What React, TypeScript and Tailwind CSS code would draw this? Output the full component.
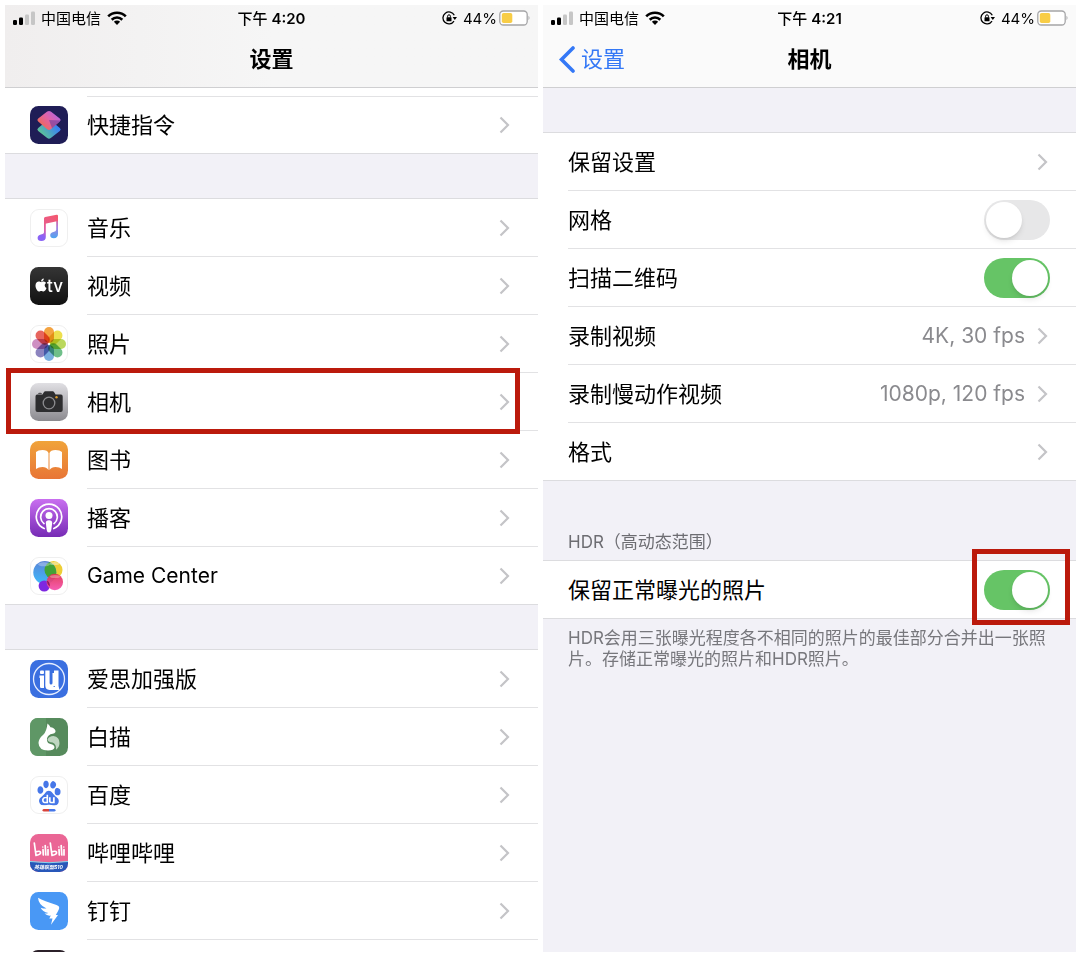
import { ReactNode } from "react";
import { FaApple } from "react-icons/fa";
import { SiBaidu } from "react-icons/si";

interface SettingsItem {
  id: string;
  name: string;
  icon: ReactNode;
  highlighted?: boolean;
}

const ShortcutsIcon = () => (
  <svg viewBox="0 0 38 38" className="size-full">
    <defs>
      <linearGradient id="sc-top" x1="0.1" y1="0.8" x2="0.9" y2="0.2">
        <stop offset="0" stopColor="#f0694f" />
        <stop offset="0.55" stopColor="#e062a8" />
        <stop offset="1" stopColor="#b565dc" />
      </linearGradient>
      <linearGradient id="sc-bottom" x1="0.1" y1="0.8" x2="0.9" y2="0.3">
        <stop offset="0.1" stopColor="#5cc19a" />
        <stop offset="0.9" stopColor="#3a82f2" />
      </linearGradient>
    </defs>
    <rect width="38" height="38" rx="8.5" fill="#1f1d56" />
    <path d="M17.2 14.6Q19 13.4 20.800 14.6L29.800 22Q31.600 23.500 29.800 25L20.800 32Q19 33.400 17.200 32L8.200 25Q6.400 23.500 8.200 22Z" fill="url(#sc-bottom)" />
    <path d="M17.2 5.6Q19 4.400 20.800 5.600L29.800 12.600Q31.600 14 29.800 15.600L20.800 23.200Q19 24.600 17.200 23.200L8.200 15.600Q6.400 14 8.200 12.600Z" fill="url(#sc-top)" />
    <path d="M19 14L30.600 14.500L29.800 15.600L22 22.200Z" fill="#6a3f9c" opacity="0.6" />
  </svg>
);

const MusicIcon = () => (
  <svg viewBox="0 0 38 38" className="size-full">
    <defs>
      <linearGradient id="music" x1="0.7" y1="0" x2="0.45" y2="1">
        <stop offset="0" stopColor="#f5576c" />
        <stop offset="0.45" stopColor="#d95fb4" />
        <stop offset="0.75" stopColor="#8a63f5" />
        <stop offset="1" stopColor="#8a63f5" />
      </linearGradient>
      <linearGradient id="music-beam" x1="0" y1="1" x2="1" y2="0">
        <stop offset="0" stopColor="#e85d8c" />
        <stop offset="1" stopColor="#f5576c" />
      </linearGradient>
      <linearGradient id="music-right" x1="0" y1="0" x2="0" y2="1">
        <stop offset="0" stopColor="#f5576c" />
        <stop offset="0.5" stopColor="#a97fe0" />
        <stop offset="1" stopColor="#4ba5f0" />
      </linearGradient>
    </defs>
    <rect x="0.5" y="0.5" width="37" height="37" rx="8.500" fill="#fff" stroke="#efefef" />
    <path d="M14 9.500H15.800V28Q15.800 31.800 11.300 32Q7.600 32 7.600 29Q7.600 26.200 11 25.600Q14 25.200 14 23.500Z" fill="url(#music)" />
    <path d="M26.200 7H28V25Q28 29 23.800 29.300Q20.200 29.300 20.200 26.300Q20.200 23.700 23.400 23Q26.200 22.500 26.200 20.800Z" fill="url(#music-right)" />
    <path d="M14 9.500Q14 8.300 15.200 8L26.600 5.700Q28 5.500 28 6.800V12L14 15Z" fill="url(#music-beam)" />
  </svg>
);

const TvIcon = () => (
  <svg viewBox="0 0 38 38" className="size-full">
    <defs>
      <linearGradient id="tv" x1="0" y1="0" x2="0" y2="1">
        <stop offset="0" stopColor="#353535" />
        <stop offset="1" stopColor="#111" />
      </linearGradient>
    </defs>
    <rect width="38" height="38" rx="8.500" fill="url(#tv)" />
    <FaApple x="3.500" y="10.500" size={15} color="#fff" />
    <text x="17" y="25" fontSize="17" fontWeight="500" fill="#fff" fontFamily="Inter, sans-serif">tv</text>
  </svg>
);

const petals = ["#f39a2d", "#ecdc3a", "#b4d44b", "#5fb87c", "#6aa5dc", "#8077b8", "#c983bb", "#e5544c"];

const PhotosIcon = () => (
  <svg viewBox="0 0 38 38" className="size-full">
    <rect x="0.500" y="0.500" width="37" height="37" rx="8.500" fill="#fff" stroke="#efefef" />
    {petals.map((color, i) => (
      <rect
        key={color}
        x="14"
        y="2"
        width="10"
        height="16"
        rx="5"
        fill={color}
        opacity="0.9"
        transform={`rotate(${i * 45} 19 19)`}
        className="mix-blend-multiply"
      />
    ))}
  </svg>
);

const CameraIcon = () => (
  <svg viewBox="0 0 38 38" className="size-full">
    <defs>
      <linearGradient id="camera" x1="0" y1="0" x2="0" y2="1">
        <stop offset="0" stopColor="#e0dfe3" />
        <stop offset="1" stopColor="#8b8a8f" />
      </linearGradient>
    </defs>
    <rect width="38" height="38" rx="8.500" fill="url(#camera)" />
    <path d="M5.500 13.500Q5.500 11.800 7.200 11.600H12.500L14 9Q14.400 8.300 15.300 8.300H22.700Q23.600 8.300 24 9L25.500 11.600H31Q32.700 11.800 32.700 13.500V27Q32.700 29 30.700 29H7.500Q5.500 29 5.500 27Z" fill="#2d2d2f" />
    <path d="M8 10.800Q8 9.800 10 9.800Q12 9.800 12 10.800Z" fill="#2d2d2f" />
    <circle cx="19" cy="20" r="5.800" fill="none" stroke="#8c8c8f" strokeWidth="1.300" />
    <circle cx="26.500" cy="14.300" r="1.200" fill="#d99a2b" />
  </svg>
);

const BooksIcon = () => (
  <svg viewBox="0 0 38 38" className="size-full">
    <defs>
      <linearGradient id="books" x1="0" y1="0" x2="0" y2="1">
        <stop offset="0" stopColor="#f0a33a" />
        <stop offset="1" stopColor="#e87536" />
      </linearGradient>
    </defs>
    <rect width="38" height="38" rx="8.500" fill="url(#books)" />
    <path d="M18.500 12Q17.500 9 12.500 9Q8 9 6 11V28Q8.500 26 12.500 26Q16.500 26 18.500 29Z" fill="#fff" />
    <path d="M19.500 12Q20.500 9 25.500 9Q30 9 32 11V28Q29.500 26 25.500 26Q21.500 26 19.500 29Z" fill="#fff" />
  </svg>
);

const PodcastsIcon = () => (
  <svg viewBox="0 0 38 38" className="size-full">
    <defs>
      <linearGradient id="podcasts" x1="0" y1="0" x2="0" y2="1">
        <stop offset="0" stopColor="#c96ff0" />
        <stop offset="1" stopColor="#762bb5" />
      </linearGradient>
    </defs>
    <rect width="38" height="38" rx="8.500" fill="url(#podcasts)" />
    <g fill="none" stroke="#fff" strokeLinecap="round">
      <path d="M14.200 29.500A12.700 12.700 0 1 1 23.800 29.500" strokeWidth="1.700" />
      <path d="M14 24.600A8.300 8.300 0 1 1 24 24.600" strokeWidth="1.700" />
    </g>
    <circle cx="19" cy="16.500" r="3.500" fill="#fff" />
    <path d="M15.800 23.800Q15.800 21.300 19 21.300Q22.200 21.300 22.200 23.800L21.300 31Q21 33.500 19 33.500Q17 33.500 16.700 31Z" fill="#fff" />
  </svg>
);

const GameCenterIcon = () => (
  <svg viewBox="0 0 38 38" className="size-full">
    <defs>
      <linearGradient id="gc-blue" x1="0.500" y1="0" x2="0.400" y2="1">
        <stop offset="0" stopColor="#5a83d6" />
        <stop offset="1" stopColor="#3fb9fb" />
      </linearGradient>
      <linearGradient id="gc-pink" x1="0" y1="0" x2="0" y2="1">
        <stop offset="0" stopColor="#e0304e" />
        <stop offset="1" stopColor="#f64fae" />
      </linearGradient>
      <clipPath id="gc-clip">
        <circle cx="14.800" cy="15.500" r="11.500" />
      </clipPath>
    </defs>
    <rect x="0.500" y="0.500" width="37" height="37" rx="8.500" fill="#fff" stroke="#efefef" />
    <circle cx="23.500" cy="13" r="9" fill="#edce36" />
    <circle cx="14.800" cy="15.500" r="11.500" fill="url(#gc-blue)" />
    <circle cx="23.500" cy="13" r="9" fill="#41a336" clipPath="url(#gc-clip)" />
    <circle cx="14.200" cy="29" r="5.600" fill="#7d27e0" />
    <circle cx="24.800" cy="25" r="8.300" fill="url(#gc-pink)" opacity="0.920" />
    <path d="M16.800 23.400A5.600 5.600 0 0 1 19.700 29.500Q17 27 16.800 23.400Z" fill="#8c1a60" />
    <ellipse cx="14" cy="7.300" rx="6" ry="2" fill="#fff" opacity="0.300" />
    <ellipse cx="24.500" cy="6.500" rx="5" ry="1.500" fill="#fff" opacity="0.400" />
    <ellipse cx="25" cy="19.500" rx="5" ry="1.600" fill="#fff" opacity="0.300" />
  </svg>
);

const AisiIcon = () => (
  <svg viewBox="0 0 38 38" className="size-full">
    <rect width="38" height="38" rx="8.500" fill="#3a6fe0" />
    <circle cx="19" cy="19" r="15.500" fill="none" stroke="#e5edff" strokeWidth="1.300" />
    <g fill="#fff">
      <rect x="10" y="10.500" width="4" height="3.500" rx="1" />
      <path d="M9.500 15.500H14V28H11.200Q10 28 10 26.800V18H9.500Z" />
      <path d="M15.300 10.500H19.600V23Q19.600 24.500 21 24.500Q22.500 24.500 22.500 23V13H24V10.500H28.500V26L29.500 30H19.500Q15.300 29.500 15.300 25.500Z" />
    </g>
    <path d="M20.500 12.500V22.500M23.500 26.500H25" stroke="#3a6fe0" strokeWidth="0.800" />
  </svg>
);

const BaimiaoIcon = () => (
  <svg viewBox="0 0 38 38" className="size-full">
    <rect width="38" height="38" rx="8.500" fill="#568a5c" />
    <path d="M8.500 0H16V38H8.500Q0 38 0 29.500V8.500Q0 0 8.500 0Z" fill="#5f9766" />
    <path d="M17.500 5.500Q19.500 7 20.500 9.300Q24 9.300 25.600 13Q25.600 15.800 20.500 16.200Q16.300 18.500 17 22.500Q17.500 25.500 20.500 26Q24.500 26.800 24.500 29.500Q24 32.500 18 32.500Q8.800 32.300 8.500 25Q8.700 20.500 13.500 16.500Q16.500 13.500 17.500 5.500Z" fill="#fff" />
    <path d="M17.500 21.500Q19 18 23.500 18Q29.500 18.800 29.500 25Q29.500 29 26 31.800Q26.500 26 22.500 24.500Q17.800 24 17.500 21.500Z" fill="#bfd6c1" />
  </svg>
);

const BaiduIcon = () => (
  <svg viewBox="0 0 38 38" className="size-full">
    <rect x="0.500" y="0.500" width="37" height="37" rx="8.500" fill="#fff" stroke="#efefef" />
    <SiBaidu x="6.500" y="4.500" size={25} color="#4677e8" />
    <path d="M14 35.500Q12.500 35.500 12.500 34.300Q12.500 33 14 33H19V35.500Z" fill="#d8443c" />
    <path d="M19 33H24Q25.500 33 25.500 34.300Q25.500 35.500 24 35.500H19Z" fill="#4677e8" />
  </svg>
);

const BilibiliIcon = () => (
  <svg viewBox="0 0 38 38" className="size-full">
    <defs>
      <clipPath id="bili-clip">
        <rect width="38" height="38" rx="8.500" />
      </clipPath>
    </defs>
    <g clipPath="url(#bili-clip)">
      <rect width="38" height="38" fill="#ea6695" />
      <path d="M0 27.500Q19 30 38 27.500V38H0Z" fill="#2857b9" />
      <path d="M0 27.500Q19 30 38 27.500" fill="none" stroke="#84d9ee" strokeWidth="1" />
    </g>
    <g fill="none" stroke="#fff" strokeWidth="1.700" strokeLinecap="round">
      <path d="M4.300 9L6 21.300Q10.800 20.500 10.500 18.300Q10 16.500 6 17.800" />
      <path d="M13 15.500L13.300 21M15.200 11.500L15.800 21M18 15.500V21" />
      <path d="M20.300 9L22 21.300Q26.800 20.500 26.500 18.300Q26 16.500 22 17.800" />
      <path d="M29 15.500L29.300 21M31.200 11.500L31.800 21M34 15.500V21" />
      <path d="M12.800 12.800V13.200M17.800 12.800V13.200M28.800 12.800V13.200M33.800 12.800V13.200" strokeWidth="1.300" />
    </g>
    <text x="18.500" y="35" fontSize="5" fontWeight="700" fontStyle="italic" textAnchor="middle" fill="#fff">英雄联盟S10</text>
  </svg>
);

const DingTalkIcon = () => (
  <svg viewBox="0 0 38 38" className="size-full">
    <rect width="38" height="38" rx="8.500" fill="#4998f5" />
    <path d="M8 5.800Q14 9.300 26.500 13Q30 14.200 29 17Q27.500 20.500 25.800 23H28L21 32.800L22.500 26.600H19.300L20.800 23.500Q17.500 24.200 14.500 21.500Q17 21.600 18.300 21Q12.300 19.800 10.700 15.700Q14 16.800 16.500 16.500Q8.500 13 8 5.800Z" fill="#fff" />
  </svg>
);

const systemApps: SettingsItem[] = [
  { id: "music", name: "音乐", icon: <MusicIcon /> },
  { id: "tv", name: "视频", icon: <TvIcon /> },
  { id: "photos", name: "照片", icon: <PhotosIcon /> },
  { id: "camera", name: "相机", icon: <CameraIcon />, highlighted: true },
  { id: "books", name: "图书", icon: <BooksIcon /> },
  { id: "podcasts", name: "播客", icon: <PodcastsIcon /> },
  { id: "game-center", name: "Game Center", icon: <GameCenterIcon /> },
];

const otherApps: SettingsItem[] = [
  { id: "aisi", name: "爱思加强版", icon: <AisiIcon /> },
  { id: "baimiao", name: "白描", icon: <BaimiaoIcon /> },
  { id: "baidu", name: "百度", icon: <BaiduIcon /> },
  { id: "bilibili", name: "哔哩哔哩", icon: <BilibiliIcon /> },
  { id: "dingtalk", name: "钉钉", icon: <DingTalkIcon /> },
];

const Chevron = () => (
  <svg viewBox="0 0 11 18" className="h-[18px] w-[11px] shrink-0" fill="none" stroke="#c4c4c7" strokeWidth="2.200">
    <path d="M1.500 1.500L9 9L1.500 16.500" />
  </svg>
);

const StatusBar = ({ time }: { time: string }) => (
  <div className="flex h-[26px] items-center px-2 text-[15px]">
    <div className="flex flex-1 items-center gap-[6px]">
      <svg viewBox="0 0 22 14" className="h-[14px] w-[22px]">
        <rect x="0" y="9" width="4" height="5" rx="1.200" />
        <rect x="6" y="6.500" width="4" height="7.500" rx="1.200" />
        <rect x="12" y="3.500" width="4" height="10.500" rx="1.200" fill="#c6c6c6" />
        <rect x="18" y="0.500" width="4" height="13.500" rx="1.200" fill="#c6c6c6" />
      </svg>
      <span>中国电信</span>
      <svg viewBox="0 0 20 14" className="h-[14px] w-5" fill="none" stroke="#000" strokeWidth="2.600">
        <path d="M1.200 5.300A12.500 12.500 0 0 1 18.800 5.300" />
        <path d="M4.700 8.700A7.600 7.600 0 0 1 15.300 8.700" />
        <path d="M10 14L6.900 10.800A4.400 4.400 0 0 1 13.100 10.800Z" fill="#000" stroke="none" />
      </svg>
    </div>
    <span className="font-medium">
      下午 <span className="font-semibold">{time}</span>
    </span>
    <div className="flex flex-1 items-center justify-end">
      {/* Rotation lock */}
      <svg viewBox="0 0 15 14" className="mr-[6px] h-[14px] w-[15px]">
        <path d="M12.300 4.200A6 6 0 1 0 12 10.200" fill="none" stroke="#000" strokeWidth="1.300" />
        <path d="M10.600 6H15L12.800 9Z" />
        <rect x="4.500" y="6.300" width="5" height="4" rx="0.500" />
        <path d="M5.600 6.500V5.200A1.400 1.400 0 0 1 8.400 5.200V6.500" fill="none" stroke="#000" strokeWidth="1" />
      </svg>
      <span className="mr-[2px]">44%</span>
      {/* Battery */}
      <svg viewBox="0 0 31 16" className="h-4 w-[31px]">
        <rect x="0.800" y="1" width="27.400" height="14" rx="3.500" fill="#fff" stroke="#a5a5a7" strokeWidth="1.300" />
        <rect x="2.800" y="3" width="10.500" height="10" rx="1.800" fill="#f8cd46" />
        <path d="M29.500 5.800Q31.500 8 29.500 10.200Z" fill="#a5a5a7" />
      </svg>
    </div>
  </div>
);

const ItemRow = ({ item, last }: { item: SettingsItem; last?: boolean }) => (
  <li className={last ? "relative border-b border-[#dcdcdf]" : "relative"}>
    <a href={`#${item.id}`} className="flex items-center gap-[19px] pl-[25px]">
      <span className="size-[38px] shrink-0">{item.icon}</span>
      <span
        className={
          last
            ? "flex h-[57px] flex-1 items-center justify-between pr-7 text-[21px]"
            : "flex h-[58px] flex-1 items-center justify-between border-b border-[#e2e2e4] pr-7"
        }
      >
        {item.name}
        <Chevron />
      </span>
    </a>
    {item.highlighted && (
      <span className="pointer-events-none absolute -top-[5px] -bottom-[3px] left-px right-[18px] z-10 border-[5px] border-[#bb1a0c]" />
    )}
  </li>
);

const ItemList = ({ items }: { items: SettingsItem[] }) => (
  <ul className="bg-white">
    {items.map((item, i) => (
      <ItemRow key={item.id} item={item} last={i === items.length - 1} />
    ))}
  </ul>
);

const SectionGap = () => <div className="h-[45px] border-b border-[#dcdcdf]" />;

interface LinkRowProps {
  name: string;
  value?: string;
  last?: boolean;
}

const LinkRow = ({ name, value, last }: LinkRowProps) => (
  <li className="pl-[25px]">
    <a
      href={`#${name}`}
      className={
        last
          ? "flex h-[57px] items-center gap-3 pr-7"
          : "flex h-[58px] items-center gap-3 border-b border-[#e2e2e4] pr-7"
      }
    >
      <span className="flex-1">{name}</span>
      {value && <span className="text-[21px] text-[#8a8a8e]">{value}</span>}
      <Chevron />
    </a>
  </li>
);

interface SwitchRowProps {
  id: string;
  name: string;
  on?: boolean;
  divider?: boolean;
}

const SwitchRow = ({ id, name, on, divider }: SwitchRowProps) => (
  <div className="pl-[25px]">
    <div
      className={
        divider
          ? "flex h-[58px] items-center justify-between border-b border-[#e2e2e4] pr-[26px]"
          : "flex h-[57px] items-center justify-between pr-[26px]"
      }
    >
      <label htmlFor={id}>{name}</label>
      <input
        id={id}
        type="checkbox"
        role="switch"
        defaultChecked={on}
        className="relative h-10 w-[66px] appearance-none rounded-full bg-[#e7e7e8] before:absolute before:left-[2px] before:top-[2px] before:size-9 before:rounded-full before:bg-white before:shadow-md checked:bg-[#66c466] checked:before:left-7"
      />
    </div>
  </div>
);

const SettingsScreen = () => (
  <section className="overflow-hidden bg-[#f2f1f7]">
    <header className="border-b border-[#cfcfd1] bg-linear-to-r from-[#f0eeee] to-[#f6f6f6] to-50%">
      <StatusBar time="4:20" />
      <h1 className="flex h-14 items-center justify-center font-semibold">设置</h1>
    </header>
    <div className="h-[9px] bg-white pl-[82px]">
      <div className="h-full border-b border-[#e2e2e4]" />
    </div>
    <ul className="bg-white">
      <li className="border-b border-[#dcdcdf]">
        <a href="#shortcuts" className="flex h-14 items-center gap-[19px] pl-[25px] pr-7">
          <span className="size-[38px] shrink-0">
            <ShortcutsIcon />
          </span>
          <span className="flex-1">快捷指令</span>
          <Chevron />
        </a>
      </li>
    </ul>
    <SectionGap />
    <ItemList items={systemApps} />
    <SectionGap />
    <ul className="bg-white">
      {otherApps.map((item) => (
        <ItemRow key={item.id} item={item} />
      ))}
    </ul>
    {/* Next app, cut off by the bottom of the screen */}
    <div className="h-3 overflow-hidden bg-white pl-[25px] pt-[10px]">
      <div className="size-[38px] rounded-lg bg-[#2b2029]" />
    </div>
  </section>
);

const CameraScreen = () => (
  <section className="bg-[#f2f1f7]">
    <header className="border-b border-[#cfcfd1] bg-[#fafafa]">
      <StatusBar time="4:21" />
      <div className="flex h-14 items-center px-4">
        <a href="#settings" className="flex flex-1 items-center gap-[6px] text-[#3478f6]">
          <svg viewBox="0 0 16 27" className="h-[27px] w-4" fill="none" stroke="currentColor" strokeWidth="3.600" strokeLinecap="round">
            <path d="M14 2L2.500 13.500L14 25" />
          </svg>
          设置
        </a>
        <h1 className="font-semibold">相机</h1>
        <div className="flex-1" />
      </div>
    </header>
    <div className="h-[45px] border-b border-[#dcdcdf]" />
    <ul className="bg-white">
      <LinkRow name="保留设置" />
      <li>
        <SwitchRow id="grid" name="网格" divider />
      </li>
      <li>
        <SwitchRow id="qr" name="扫描二维码" on divider />
      </li>
      <LinkRow name="录制视频" value="4K, 30 fps" />
      <LinkRow name="录制慢动作视频" value="1080p, 120 fps" />
      <LinkRow name="格式" last />
    </ul>
    <h2 className="flex h-[81px] items-end border-y border-[#dcdcdf] px-[25px] pb-[9px] text-[17px] text-[#6d6d72]">
      HDR（高动态范围）
    </h2>
    <div className="relative border-b border-[#dcdcdf] bg-white">
      <SwitchRow id="hdr" name="保留正常曝光的照片" on />
      <span className="pointer-events-none absolute -top-3 -bottom-[7px] right-[6px] z-10 w-[98px] border-[5px] border-[#bb1a0c]" />
    </div>
    <p className="px-[25px] pt-[9px] text-[17px] leading-[21px] text-[#77777c]">
      HDR会用三张曝光程度各不相同的照片的最佳部分合并出一张照片。存储正常曝光的照片和HDR照片。
    </p>
  </section>
);

const App = () => {
  return (
    <main
      lang="zh-CN"
      className="grid min-h-screen grid-cols-2 gap-[5px] bg-white py-[5px] pl-[5px] pr-1 font-[Inter,'Noto_Sans_CJK_SC',sans-serif] text-[22px] leading-none text-black"
    >
      <SettingsScreen />
      <CameraScreen />
    </main>
  );
};

export default App;
